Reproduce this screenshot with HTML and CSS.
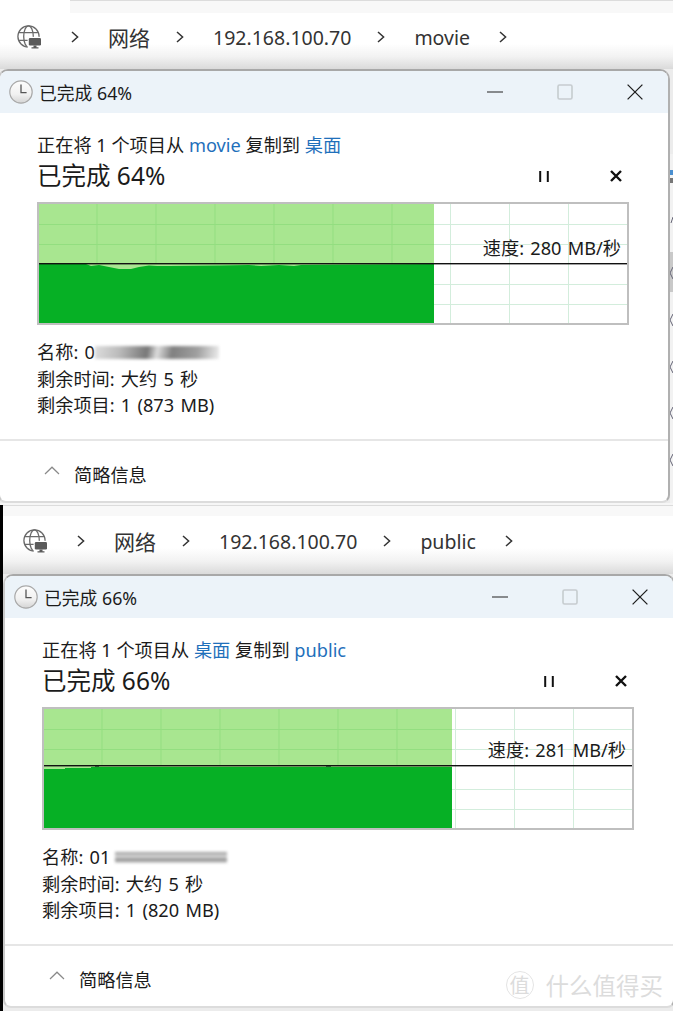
FILE: index.html
```html
<!DOCTYPE html>
<html lang="zh-CN">
<head>
  <meta charset="UTF-8">
  <title>复制进度</title>
  <link rel="stylesheet" href="styles.css">
</head>
<body>

<svg class="defs" width="0" height="0">
  <symbol id="globe" viewBox="0 0 24 24">
    <g fill="none" stroke="#6a6a6a" stroke-width="1.3">
      <circle cx="11.5" cy="11.5" r="10.6"/>
      <ellipse cx="11.5" cy="11.5" rx="4.8" ry="10.6"/>
      <path d="M1.6 7.6H21.4M1.6 15.4H21.4"/>
    </g>
    <rect x="10.6" y="11.8" width="14" height="12.2" fill="#fff"/>
    <rect x="11.8" y="13" width="12.2" height="7.4" rx="1.2" fill="#5a5a5a"/>
    <path d="M16.5 20.4h3v1.8h2v1.4h-7v-1.4h2z" fill="#5a5a5a"/>
  </symbol>
  <symbol id="chev" viewBox="0 0 8 12">
    <path d="M1 1l5.6 5-5.6 5" fill="none" stroke="#333" stroke-width="1.5"/>
  </symbol>
  <symbol id="clock" viewBox="0 0 24 24">
    <defs>
      <linearGradient id="face" x1="0" y1="0" x2="0" y2="1">
        <stop offset="0" stop-color="#fdfdfd"/>
        <stop offset="0.6" stop-color="#f1f1f1"/>
        <stop offset="1" stop-color="#d4d4d4"/>
      </linearGradient>
    </defs>
    <circle cx="12" cy="12" r="11.2" fill="url(#face)" stroke="#a9a9a9" stroke-width="1.2"/>
    <path d="M12 4.6V12.6H17.6" fill="none" stroke="#555" stroke-width="1.3"/>
  </symbol>
  <symbol id="min" viewBox="0 0 16 16">
    <path d="M0 8H16" stroke="#222" stroke-width="1.2"/>
  </symbol>
  <symbol id="max" viewBox="0 0 16 16">
    <rect x="1" y="1" width="14" height="14" rx="1.5" fill="none" stroke="#c6cccf" stroke-width="1.6"/>
  </symbol>
  <symbol id="close" viewBox="0 0 16 16">
    <path d="M0.6 0.6L15.4 15.4M15.4 0.6L0.6 15.4" stroke="#222" stroke-width="1.3"/>
  </symbol>
  <symbol id="pause" viewBox="0 0 10 11">
    <path d="M1.2 0V11M8.8 0V11" stroke="#111" stroke-width="2"/>
  </symbol>
  <symbol id="stop" viewBox="0 0 12 12">
    <path d="M1 1L11 11M11 1L1 11" stroke="#111" stroke-width="2.4"/>
  </symbol>
  <symbol id="up" viewBox="0 0 16 9">
    <path d="M1 8L8 1.2 15 8" fill="none" stroke="#8a8a8a" stroke-width="1.2"/>
  </symbol>
</svg>

<section class="shot shot-first">
  <div class="bar-top"></div>
  <div class="crumbs">
    <svg class="ico-globe"><use href="#globe"/></svg>
    <svg class="ico-chev"><use href="#chev"/></svg>
    <span class="crumb-cjk">网络</span>
    <svg class="ico-chev"><use href="#chev"/></svg>
    <span>192.168.100.70</span>
    <svg class="ico-chev"><use href="#chev"/></svg>
    <span>movie</span>
    <svg class="ico-chev"><use href="#chev"/></svg>
  </div>
  <div class="win-row">
    <div class="window">
      <div class="titlebar">
        <svg class="ico-clock"><use href="#clock"/></svg>
        <span class="title-text">已完成 64%</span>
        <div class="controls">
          <svg class="ico-ctl"><use href="#min"/></svg>
          <svg class="ico-ctl"><use href="#max"/></svg>
          <svg class="ico-ctl"><use href="#close"/></svg>
        </div>
      </div>
      <div class="content">
        <p class="from-to">正在将 1 个项目从 <a class="lnk">movie</a> 复制到 <a class="lnk">桌面</a></p>
        <div class="head-row">
          <h2 class="percent">已完成 64%</h2>
          <div class="actions">
            <svg class="ico-pause"><use href="#pause"/></svg>
            <svg class="ico-stop"><use href="#stop"/></svg>
          </div>
        </div>
        <div class="graph">
          <svg class="graph-svg" viewBox="0 0 588 119">
            <path d="M411.5 0V119M470.5 0V119M529.5 0V119M395 20.5H588M395 40.5H588M395 80.5H588M395 100.5H588" stroke="#d3eddc" stroke-width="1"/>
            <rect width="395" height="70" fill="#a8e690"/>
            <path d="M58 0V59M117 0V59M176 0V59M235 0V59M294 0V59M353 0V59M0 20.5H395M0 40.5H395" stroke="#93de80" stroke-width="1"/>
            <path d="M0 60H47L52 62L60 61L70 63L80 65L92 65L100 63L110 61.5L118 62L130 62L180 61.5L210 61L222 62L240 61L255 62L262 61L395 60V119H0Z" fill="#06b025"/>
            <rect y="59" width="588" height="1.4" fill="#111"/>
          </svg>
          <span class="speed">速度: 280 MB/秒</span>
        </div>
        <div class="details">
          <div>名称: 0<i class="smudge"></i></div>
          <div>剩余时间: 大约 5 秒</div>
          <div>剩余项目: 1 (873 MB)</div>
        </div>
      </div>
      <div class="footer">
        <svg class="ico-up"><use href="#up"/></svg>
        <span>简略信息</span>
      </div>
    </div>
    <svg class="peek" viewBox="0 0 3 434">
      <rect y="85" width="3" height="349" fill="#f2f2f2"/>
      <rect y="183" width="3" height="40" fill="#c9c9c9"/>
      <rect y="101" width="3" height="5" fill="#4a8fd0"/>
      <rect y="109" width="3" height="5" fill="#777"/>
      <path d="M3 148L1 154M3 198L0 204L3 210M3 245L0 251L3 257M3 292L0 298L3 304M3 338L0 344L3 350M3 385L0 391L3 397" fill="none" stroke="#667" stroke-width="1"/>
    </svg>
  </div>
  <div class="bar-foot"></div>
</section>

<section class="shot shot-second">
  <div class="bar-top"></div>
  <div class="crumbs">
    <svg class="ico-globe"><use href="#globe"/></svg>
    <svg class="ico-chev"><use href="#chev"/></svg>
    <span class="crumb-cjk">网络</span>
    <svg class="ico-chev"><use href="#chev"/></svg>
    <span>192.168.100.70</span>
    <svg class="ico-chev"><use href="#chev"/></svg>
    <span>public</span>
    <svg class="ico-chev"><use href="#chev"/></svg>
  </div>
  <div class="win-row">
    <div class="window">
      <div class="titlebar">
        <svg class="ico-clock"><use href="#clock"/></svg>
        <span class="title-text">已完成 66%</span>
        <div class="controls">
          <svg class="ico-ctl"><use href="#min"/></svg>
          <svg class="ico-ctl"><use href="#max"/></svg>
          <svg class="ico-ctl"><use href="#close"/></svg>
        </div>
      </div>
      <div class="content">
        <p class="from-to">正在将 1 个项目从 <a class="lnk">桌面</a> 复制到 <a class="lnk">public</a></p>
        <div class="head-row">
          <h2 class="percent">已完成 66%</h2>
          <div class="actions">
            <svg class="ico-pause"><use href="#pause"/></svg>
            <svg class="ico-stop"><use href="#stop"/></svg>
          </div>
        </div>
        <div class="graph">
          <svg class="graph-svg" viewBox="0 0 588 119">
            <path d="M411.5 0V119M470.5 0V119M529.5 0V119M408 20.5H588M408 40.5H588M408 80.5H588M408 100.5H588" stroke="#d3eddc" stroke-width="1"/>
            <rect width="408" height="62" fill="#a8e690"/>
            <path d="M58 0V56M117 0V56M176 0V56M235 0V56M294 0V56M353 0V56M0 20.5H408M0 40.5H408" stroke="#93de80" stroke-width="1"/>
            <path d="M0 60H21V59H47V58H408V119H0Z" fill="#06b025"/>
            <path d="M51 57.6H55M282 57.6H287" stroke="#3a7f40" stroke-width="1.4"/>
            <rect y="56" width="588" height="1.4" fill="#111"/>
          </svg>
          <span class="speed speed-high">速度: 281 MB/秒</span>
        </div>
        <div class="details">
          <div>名称: 01<i class="smudge smudge-low"></i></div>
          <div>剩余时间: 大约 5 秒</div>
          <div>剩余项目: 1 (820 MB)</div>
        </div>
      </div>
      <div class="footer">
        <svg class="ico-up"><use href="#up"/></svg>
        <span>简略信息</span>
        <div class="watermark">
          <span class="wm-badge">值</span>
          <span class="wm-name">什么值得买</span>
        </div>
      </div>
    </div>
  </div>
</section>

</body>
</html>
```

FILE: styles.css
```css
html, body { margin: 0; padding: 0; height: 1011px; overflow: hidden; background: #fff; }
body { font-family: "Noto Sans", "Noto Sans CJK SC", sans-serif; color: #1b1b1b; }
.defs { display: block; height: 0; }
svg { display: block; flex: none; }

.shot { width: 673px; overflow: hidden; }
.shot-first { height: 505px; }
.shot-second { height: 506px; box-sizing: border-box; border-left: 3px solid #000; }

.bar-top { height: 12px; background: #f8f8f8; border-top: 1px solid #dcdcdc; }
.shot-first .bar-top { margin-left: 70px; }
.shot-second .bar-top { height: 10px; }

.crumbs { display: flex; align-items: center; gap: 29px; height: 48px; padding: 0 0 8px 17px; font-size: 19.5px; color: #333; background: linear-gradient(#fff 0, #fff 55%, #f2f2f2 78%, #dadada 100%); }
.shot-second .crumbs { padding-left: 20px; height: 50px; }
.crumb-cjk { font-size: 21px; }
.ico-globe { width: 24px; height: 24px; margin-right: 1px; }
.ico-chev { width: 8px; height: 12px; }
span + .ico-chev { margin-left: -3px; }
span + .ico-chev:last-child { margin-left: 0; }

.win-row { display: flex; background: #ececec; height: 434px; }
.window { flex: none; width: 672px; height: 434px; box-sizing: border-box; margin-left: -2px; display: flex; flex-direction: column; background: #fff; border: 2px solid #b0b0b0; border-left-color: #c8c8c8; border-bottom-color: #dcdcdc; border-top-color: #a8a8a8; border-radius: 10px 10px 8px 8px; overflow: hidden; }
.shot-second .win-row { height: 437px; }
.shot-second .window { margin-left: 0; }
.peek { flex: none; width: 3px; height: 434px; }
.bar-foot { height: 2px; background: #f6f6f6; }

.titlebar { display: flex; align-items: center; height: 42px; padding: 0 25px 0 9px; background: #ecf3f9; flex: none; }
.ico-clock { width: 24px; height: 24px; }
.title-text { margin-left: 6px; font-size: 17.8px; }
.controls { display: flex; gap: 54px; margin-left: auto; }
.ico-ctl { width: 16px; height: 16px; }

.content { padding: 19px 39px 0 37px; flex: none; }
.from-to { margin: 0; font-size: 18.2px; line-height: 26px; }
.lnk { color: #1f70bb; }
.head-row { display: flex; align-items: center; height: 36px; }
.percent { margin: 0; font-size: 24.5px; font-weight: 400; line-height: 36px; }
.actions { display: flex; align-items: center; gap: 61px; margin-left: auto; margin-right: 7px; }
.ico-pause { width: 10px; height: 11px; }
.ico-stop { width: 12px; height: 12px; }

.graph { position: relative; margin-top: 8px; width: 592px; height: 123px; box-sizing: border-box; border: 2px solid #bfbfbf; }
.graph-svg { width: 588px; height: 119px; }
.speed { position: absolute; right: 6px; top: 31px; font-size: 18.2px; word-spacing: 1.5px; line-height: 26px; }
.speed-high { top: 28px; }

.details { margin-top: 14px; font-size: 18.2px; word-spacing: 1.5px; line-height: 26.5px; }
.smudge { display: inline-block; vertical-align: middle; width: 124px; height: 13px; margin-top: -3px; background: linear-gradient(100deg, #ddd 0, #bbb 20%, #777 42%, #ddd 50%, #808080 62%, #a0a0a0 82%, #eee 100%); filter: blur(1.5px); }
.smudge-low { width: 112px; margin-left: 5px; height: 11px; background: linear-gradient(180deg, #999, #ddd 45%, #888 70%, #ddd), #ccc; }

.footer { flex: 1; display: flex; align-items: center; margin-top: 20px; padding: 6px 10px 0 44px; border-top: 2px solid #e6e6e6; font-size: 18.2px; }
.ico-up { width: 16px; height: 9px; margin-right: 14px; margin-top: -6px; }
.watermark { display: flex; align-items: center; gap: 12px; margin-left: auto; margin-top: 12px; color: #dcdcdc; }
.wm-badge { display: flex; align-items: center; justify-content: center; width: 28px; height: 28px; box-sizing: border-box; border: 1px solid #e4e4e4; border-radius: 50%; font-size: 20px; }
.wm-name { font-size: 23.5px; }
```
